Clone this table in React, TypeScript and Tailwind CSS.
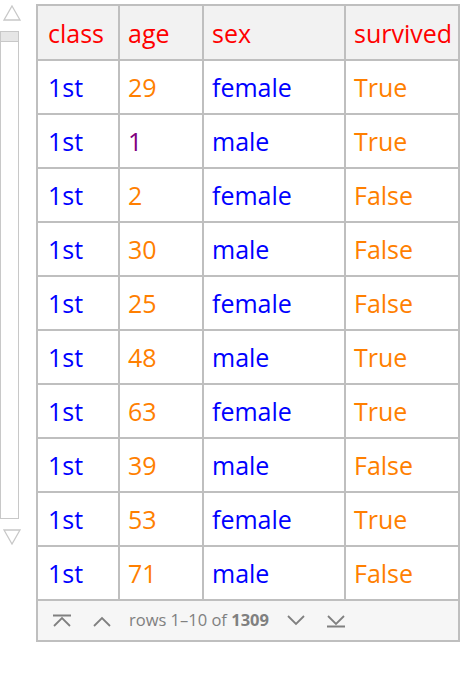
import React from "react";

const rows: [string, string, string, string][] = [
  ["1st", "29", "female", "True"],
  ["1st", "1", "male", "True"],
  ["1st", "2", "female", "False"],
  ["1st", "30", "male", "False"],
  ["1st", "25", "female", "False"],
  ["1st", "48", "male", "True"],
  ["1st", "63", "female", "True"],
  ["1st", "39", "male", "False"],
  ["1st", "53", "female", "True"],
  ["1st", "71", "male", "False"],
];

const widths = ["w-[82px]", "w-[84px]", "w-[142px]", "w-[114px]"];
const pads = ["pl-[10px]", "pl-[8px]", "pl-[8px]", "pl-[8px]"];

export default function App() {
  return (
    <div
      className="w-[462px] h-[680px] bg-white flex flex-row"
      style={{ fontFamily: '"Open Sans", sans-serif' }}
    >
      {/* scrollbar */}
      <div className="w-[36px] flex flex-col pt-[5px]">
        <svg width="20" height="17" viewBox="0 0 20 17" className="ml-[2px]">
          <path d="M10 1 L18 15 L2 15 Z" fill="none" stroke="#c8c8c8" strokeWidth="1.3" />
        </svg>
        <div className="mt-[9px] w-[19px] h-[488px] border border-[#c8c8c8] flex flex-col">
          <div className="h-[10px] bg-[#e6e6e6] border-b border-[#c8c8c8]" />
        </div>
        <svg width="20" height="17" viewBox="0 0 20 17" className="ml-[2px] mt-[9px]">
          <path d="M2 2 L18 2 L10 16 Z" fill="none" stroke="#c8c8c8" strokeWidth="1.3" />
        </svg>
      </div>

      {/* table */}
      <div className="mt-[4px] w-[424px] self-start border-l-2 border-t-2 border-[#bfbfbf] flex flex-col">
        <div className="flex flex-row bg-[#f2f2f2]">
          {["class", "age", "sex", "survived"].map((h, i) => (
            <div
              key={h}
              className={`${widths[i]} ${pads[i]} h-[55px] border-r-2 border-b-2 border-[#bfbfbf] flex items-center pt-[2px] text-[25px] font-medium text-[#ff0000]`}
            >
              {h}
            </div>
          ))}
        </div>
        {rows.map((r, ri) => (
          <div key={ri} className="flex flex-row bg-white">
            {r.map((c, i) => {
              let color = "text-[#0000ff]";
              if (i === 1) color = c === "1" ? "text-[#800080]" : "text-[#ff7f00]";
              if (i === 3) color = "text-[#ff7f00]";
              return (
                <div
                  key={i}
                  className={`${widths[i]} ${pads[i]} h-[54px] border-r-2 border-b-2 border-[#bfbfbf] flex items-center pt-[2px] text-[25px] font-medium ${color}`}
                >
                  {c}
                </div>
              );
            })}
          </div>
        ))}
        <div className="h-[41px] border-r-2 border-b-2 border-[#bfbfbf] bg-[#f6f6f6] flex flex-row items-center pl-[14px] text-[16.5px] text-[#808080]">
          <svg width="20" height="14" viewBox="0 0 20 14">
            <path d="M1 1.5 H19 M2 12 L10 4 L18 12" fill="none" stroke="#808080" strokeWidth="1.8" />
          </svg>
          <svg width="20" height="14" viewBox="0 0 20 14" className="ml-[20px]">
            <path d="M2 12 L10 4 L18 12" fill="none" stroke="#808080" strokeWidth="1.8" />
          </svg>
          <span className="ml-[17px]">
            rows 1–10 of <span className="font-bold">1309</span>
          </span>
          <svg width="20" height="14" viewBox="0 0 20 14" className="ml-[17px]">
            <path d="M2 2 L10 10 L18 2" fill="none" stroke="#808080" strokeWidth="1.8" />
          </svg>
          <svg width="20" height="14" viewBox="0 0 20 14" className="ml-[20px]">
            <path d="M2 2 L10 10 L18 2 M1 12.5 H19" fill="none" stroke="#808080" strokeWidth="1.8" />
          </svg>
        </div>
      </div>
    </div>
  );
}
